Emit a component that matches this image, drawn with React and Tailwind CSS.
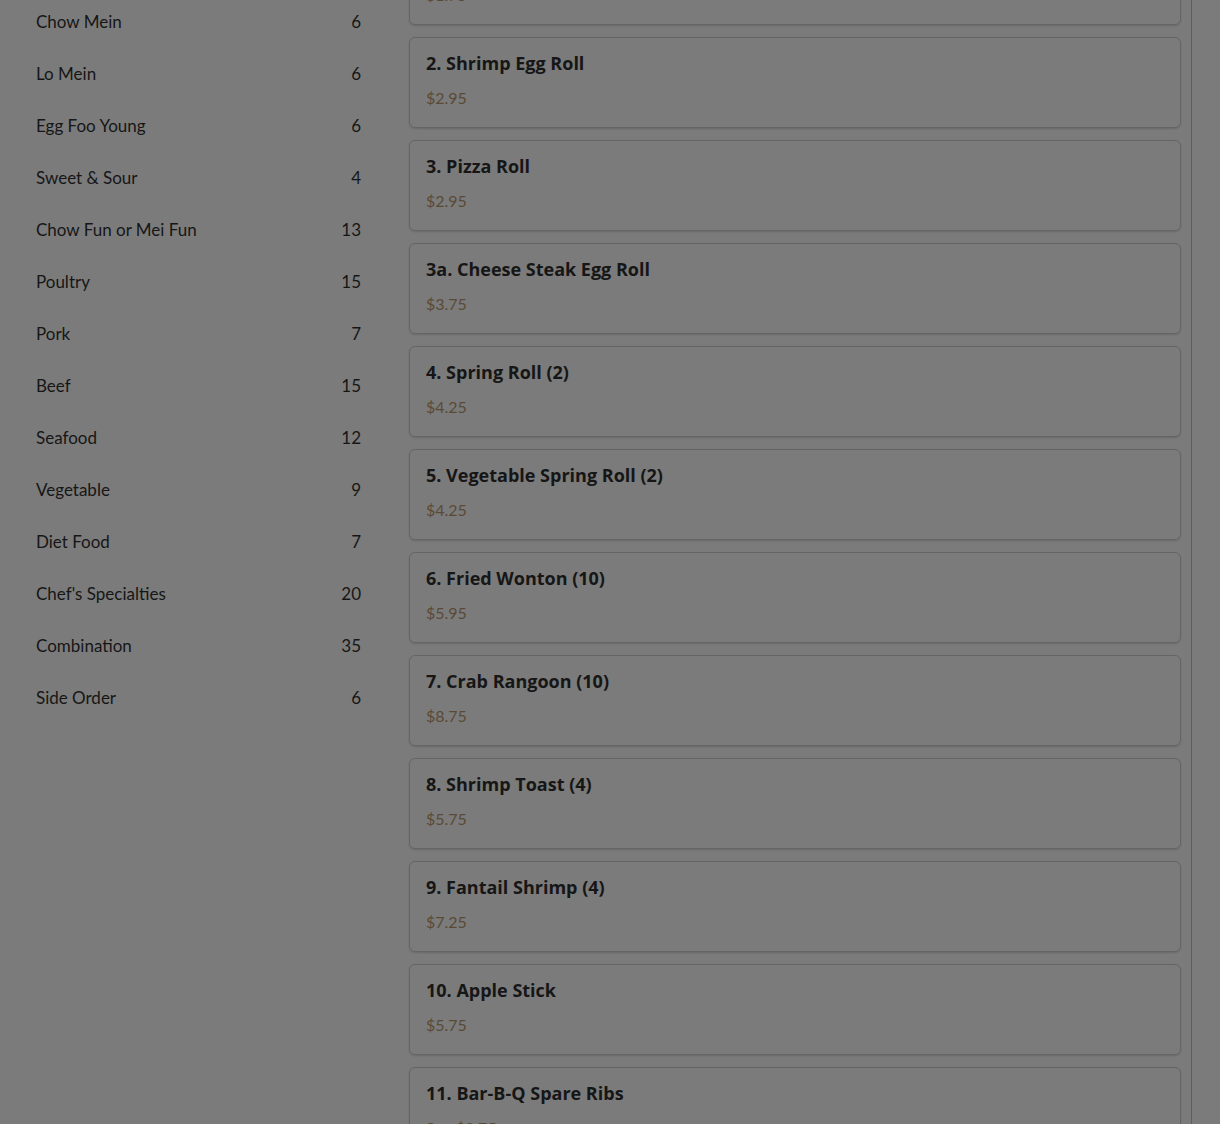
import React from "react";

const categories = [
  ["Chow Mein", 6],
  ["Lo Mein", 6],
  ["Egg Foo Young", 6],
  ["Sweet & Sour", 4],
  ["Chow Fun or Mei Fun", 13],
  ["Poultry", 15],
  ["Pork", 7],
  ["Beef", 15],
  ["Seafood", 12],
  ["Vegetable", 9],
  ["Diet Food", 7],
  ["Chef's Specialties", 20],
  ["Combination", 35],
  ["Side Order", 6],
];

const items = [
  ["1. Egg Roll", "$1.75"],
  ["2. Shrimp Egg Roll", "$2.95"],
  ["3. Pizza Roll", "$2.95"],
  ["3a. Cheese Steak Egg Roll", "$3.75"],
  ["4. Spring Roll (2)", "$4.25"],
  ["5. Vegetable Spring Roll (2)", "$4.25"],
  ["6. Fried Wonton (10)", "$5.95"],
  ["7. Crab Rangoon (10)", "$8.75"],
  ["8. Shrimp Toast (4)", "$5.75"],
  ["9. Fantail Shrimp (4)", "$7.25"],
  ["10. Apple Stick", "$5.75"],
  ["11. Bar-B-Q Spare Ribs", "Sm: $8.75"],
];

const App = () => {
  return (
    <div
      className="h-[1124px] overflow-hidden bg-[#7b7b7b] text-[#161616]"
      style={{ fontFamily: "Lato, 'Noto Sans', sans-serif" }}
    >
      <div className="flex">
        {/* Category list */}
        <aside className="w-[409px] shrink-0 pl-9 pr-12 -mt-[4px]">
          <ul>
            {categories.map(([name, count]) => (
              <li key={name} className="flex h-[52px] items-center justify-between text-[17px]">
                <span>{name}</span>
                <span>{count}</span>
              </li>
            ))}
          </ul>
        </aside>

        {/* Menu items */}
        <main className="flex-1 border-r border-[#5e5e5e] pr-[10px] mr-[28px]">
          <div className="-mt-[66px] flex flex-col gap-3">
            {items.map(([title, price]) => (
              <div
                key={title}
                className="rounded-md border border-[#656565] px-4 pt-[14px] pb-[17px] shadow-[0_1px_2px_rgba(0,0,0,0.15)]"
              >
                <h3 className="font-['Open_Sans',sans-serif] text-[18px] font-bold leading-[22px]">{title}</h3>
                <p className="mt-3 text-[16px] leading-6 text-[#5a4a35]">{price}</p>
              </div>
            ))}
          </div>
        </main>
      </div>
    </div>
  );
};

export default App;
